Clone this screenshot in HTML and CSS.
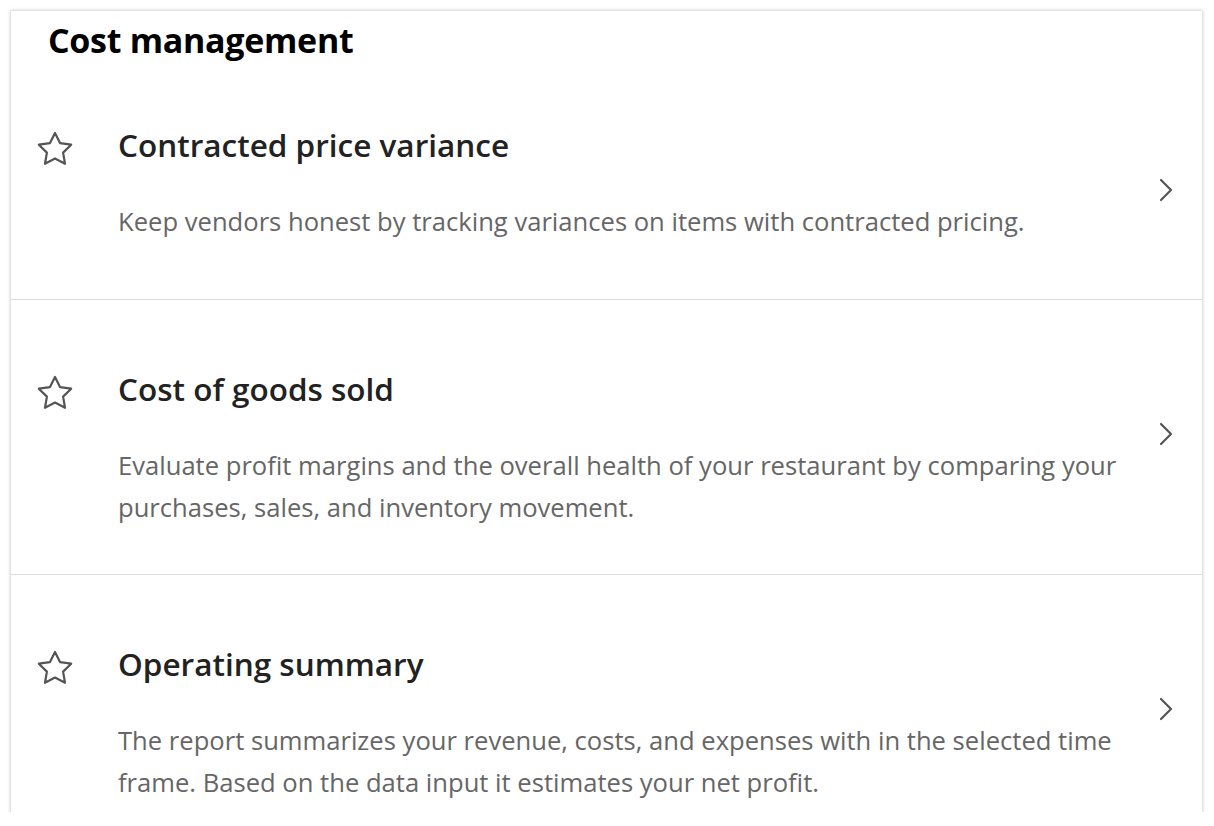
FILE: index.html
```html
<!DOCTYPE html>
<html lang="en">
<head>
<meta charset="utf-8">
<title>Cost management</title>
<link rel="stylesheet" href="styles.css">
</head>
<body>
<section class="card">
  <h1 class="card-title">Cost management</h1>
  <div class="report">
    <svg class="star" viewBox="0 0 36 36" width="36" height="36"><polygon points="18,2 23,12.1 34.2,13.7 26.1,21.6 28,32.8 18,27.5 8,32.8 9.9,21.6 1.8,13.7 13,12.1"/></svg>
    <div class="report-text">
      <h2 class="report-name">Contracted price variance</h2>
      <p class="report-desc">Keep vendors honest by tracking variances on items with contracted pricing.</p>
    </div>
    <svg class="chevron" viewBox="0 0 14 24" width="14" height="24"><polyline points="2,2 12,12 2,22"/></svg>
  </div>
  <div class="report">
    <svg class="star" viewBox="0 0 36 36" width="36" height="36"><polygon points="18,2 23,12.1 34.2,13.7 26.1,21.6 28,32.8 18,27.5 8,32.8 9.9,21.6 1.8,13.7 13,12.1"/></svg>
    <div class="report-text">
      <h2 class="report-name">Cost of goods sold</h2>
      <p class="report-desc">Evaluate profit margins and the overall health of your restaurant by comparing your purchases, sales, and inventory movement.</p>
    </div>
    <svg class="chevron" viewBox="0 0 14 24" width="14" height="24"><polyline points="2,2 12,12 2,22"/></svg>
  </div>
  <div class="report">
    <svg class="star" viewBox="0 0 36 36" width="36" height="36"><polygon points="18,2 23,12.1 34.2,13.7 26.1,21.6 28,32.8 18,27.5 8,32.8 9.9,21.6 1.8,13.7 13,12.1"/></svg>
    <div class="report-text">
      <h2 class="report-name">Operating summary</h2>
      <p class="report-desc">The report summarizes your revenue, costs, and expenses with in the selected time frame. Based on the data input it estimates your net profit.</p>
    </div>
    <svg class="chevron" viewBox="0 0 14 24" width="14" height="24"><polyline points="2,2 12,12 2,22"/></svg>
  </div>
</section>
</body>
</html>
```

FILE: styles.css
```css
* { box-sizing: border-box; }
html, body { margin: 0; padding: 0; background: #fff; }
body { font-family: "Open Sans", "Noto Sans", sans-serif; }

.card {
  margin: 11px 12px 0 11px;
  height: 801px;
  overflow: hidden;
  background: #fff;
  box-shadow: 0 0 3px 1px rgba(0,0,0,0.18);
}

.card-title {
  margin: 0;
  padding: 9px 0 0 37px;
  height: 45px;
  font-size: 34px;
  line-height: 40px;
  font-weight: 700;
  color: #000;
  letter-spacing: -0.3px;
}

.report {
  display: flex;
  align-items: flex-start;
  min-height: 244px;
  padding: 71px 29px 45px 26px;
  border-bottom: 1px solid #dcdcdc;
}

.star {
  flex: none;
  margin-top: 4px;
  fill: none;
  stroke: #555;
  stroke-width: 2.2;
  stroke-linejoin: round;
}

.report-text {
  flex: 1;
  margin-left: 45px;
  max-width: 1030px;
}

.report-name {
  margin: 0;
  font-size: 31.5px;
  line-height: 36px;
  font-weight: 600;
  color: #222;
}

.report-desc {
  margin: 38px 0 0;
  font-size: 25.6px;
  line-height: 42px;
  color: #666;
}

.chevron {
  flex: none;
  margin: 51px 0 0 auto;
  fill: none;
  stroke: #555;
  stroke-width: 2.2;
  stroke-linecap: round;
  stroke-linejoin: round;
}
```
